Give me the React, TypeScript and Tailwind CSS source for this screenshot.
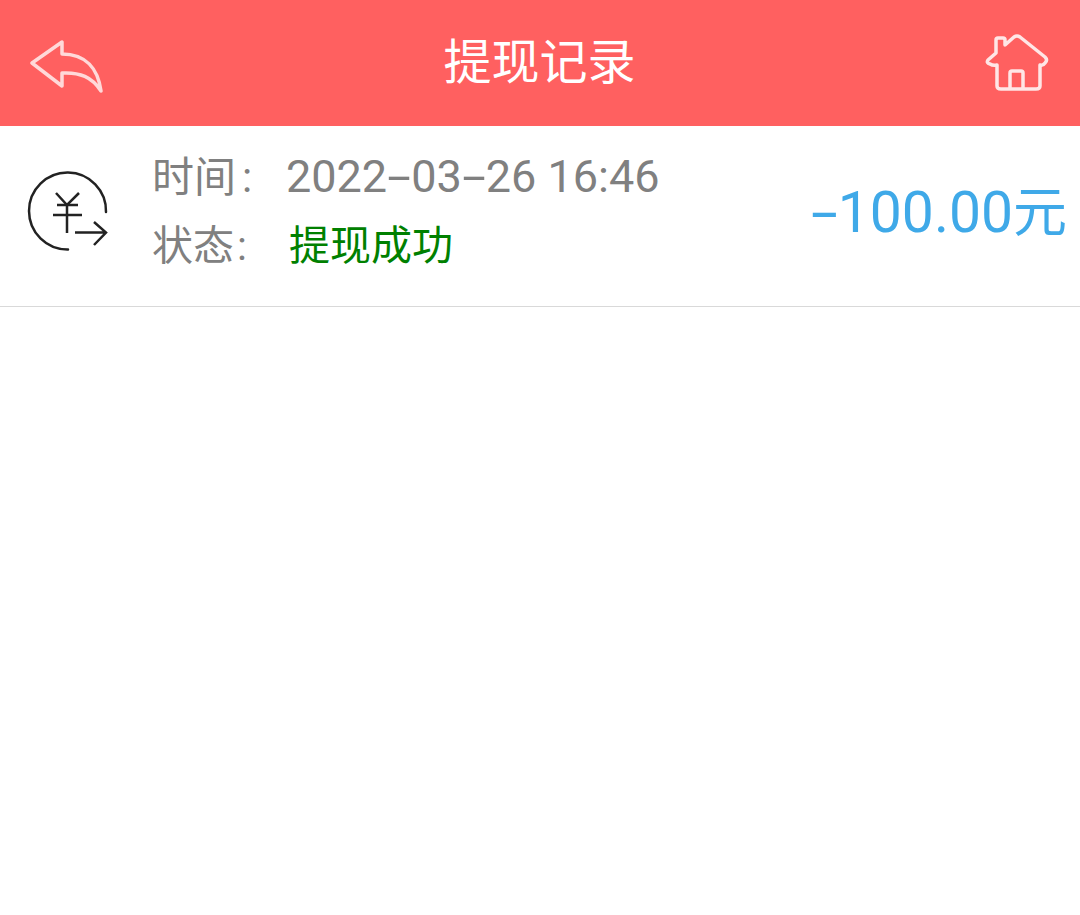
const CJK = "font-['Roboto','Noto_Sans_CJK_SC',sans-serif]";

function BackIcon() {
  return (
    <svg width="80" height="60" viewBox="0 0 80 60" fill="none" className="block">
      <path
        d="M2 30 L32 9 L32 21 C56 21 68 36 71 58 C62 44 50 39 32 40 L32 53 Z"
        stroke="#ffd9d9"
        strokeWidth="3.5"
        strokeLinejoin="round"
      />
    </svg>
  );
}

function HomeIcon() {
  return (
    <svg width="64" height="60" viewBox="985 33 64 60" fill="none" className="block">
      <path
        d="M988 60 L996 53 L996 40 Q996 38 998 38 L1003 38 Q1005 38 1005 40 L1005 45 L1014 37 Q1017 35 1020 37 L1045 57 Q1048 60 1045 63 Q1043 66 1040 65 L1040 86 Q1040 89 1036 89 L1001 89 Q997 89 997 86 L997 65 Q993 66 990 64 Q986 63 988 60 Z"
        stroke="#ffe6e6"
        strokeWidth="3.5"
        strokeLinejoin="round"
      />
      <path d="M1010 89 L1010 73 Q1010 71 1012 71 L1021 71 Q1023 71 1023 73 L1023 89" stroke="#ffe6e6" strokeWidth="3.5" />
    </svg>
  );
}

function WithdrawIcon() {
  return (
    <svg width="84" height="84" viewBox="25 170 84 84" fill="none" stroke="#222" strokeWidth="2.5" className="shrink-0 block">
      <path d="M68 249.5 A38.5 38.5 0 1 1 106 212" strokeLinecap="round" />
      <path d="M56 193 L67 205 L79 193" />
      <path d="M57 205 H78 M53 215 H82 M67 205 V233" />
      <path d="M75 232.5 H106 M94 222 L106 232.5 L94 245" />
    </svg>
  );
}

// the hyphen in the screenshot's font is much wider than Roboto's
function Dash({ wide }: { wide?: boolean }) {
  return (
    <span className={wide ? "inline-block w-[27px] scale-x-[1.7] text-center" : "inline-block w-[24px] scale-x-[1.9] text-center"}>-</span>
  );
}

export default function App() {
  return (
    <div className={`min-h-screen bg-white ${CJK}`}>
      <header className="flex h-[126px] items-center justify-between bg-[#ff6060] pl-[30px] pr-[31px]">
        <div className="w-[80px]">
          <BackIcon />
        </div>
        <h1 className="text-[48px] leading-none text-white">提现记录</h1>
        <div className="flex w-[80px] justify-end">
          <HomeIcon />
        </div>
      </header>

      <div className="flex h-[181px] items-center border-b border-[#d9d9d9] pb-[8px] pl-[25px] pr-[13px]">
        <WithdrawIcon />
        <div className="ml-[43px] flex-1">
          <div className="flex h-[70px] items-center text-[42px] text-[#808080]">
            <span className="w-[134px]">时间<span className="ml-[6px]">:</span></span>
            <span className="text-[45px]">
              2022<Dash />03<Dash />26 16:46
            </span>
          </div>
          <div className="flex h-[70px] items-center text-[41px] text-[#808080]">
            <span className="w-[137px]">状态<span className="ml-[3px]">:</span></span>
            <span className="text-[#008000]">提现成功</span>
          </div>
        </div>
        <div className="text-[57px] leading-none text-[#3fa9e8]">
          <Dash wide />100.00<span className="text-[54px]">元</span>
        </div>
      </div>
    </div>
  );
}
